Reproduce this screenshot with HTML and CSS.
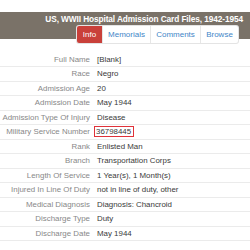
FILE: index.html
```html
<!DOCTYPE html>
<html lang="en">
<head>
    <meta charset="UTF-8">
    <title>Hospital Admission Card</title>
    <link rel="stylesheet" href="styles.css">
</head>
<body>
    <div class="header">
        <h1 class="title">US, WWII Hospital Admission Card Files, 1942-1954</h1>
        <ul class="tabs">
            <li class="tab active">Info</li>
            <li class="tab">Memorials</li>
            <li class="tab">Comments</li>
            <li class="tab">Browse</li>
        </ul>
    </div>

    <table class="record">
        <tr><th>Full Name</th><td>[Blank]</td></tr>
        <tr><th>Race</th><td>Negro</td></tr>
        <tr><th>Admission Age</th><td>20</td></tr>
        <tr><th>Admission Date</th><td>May 1944</td></tr>
        <tr><th>Admission Type Of Injury</th><td>Disease</td></tr>
        <tr><th>Military Service Number</th><td><span class="mark">36798445</span></td></tr>
        <tr><th>Rank</th><td>Enlisted Man</td></tr>
        <tr><th>Branch</th><td>Transportation Corps</td></tr>
        <tr><th>Length Of Service</th><td>1 Year(s), 1 Month(s)</td></tr>
        <tr><th>Injured In Line Of Duty</th><td>not in line of duty, other</td></tr>
        <tr><th>Medical Diagnosis</th><td>Diagnosis: Chancroid</td></tr>
        <tr><th>Discharge Type</th><td>Duty</td></tr>
        <tr><th>Discharge Date</th><td>May 1944</td></tr>
    </table>
</body>
</html>
```

FILE: styles.css
```css
body {
    margin: 0;
    padding-top: 12px;
    font-family: "Liberation Sans", Arial, sans-serif;
    background: #fff;
    width: 250px;
    overflow: hidden;
}
.header {
    background: #7a7268;
    height: 27px;
    position: relative;
}
.title {
    margin: 0;
    padding: 2px 7px 0 0;
    text-align: right;
    color: #fff;
    font-size: 8.3px;
    font-weight: bold;
    line-height: 11px;
    letter-spacing: -0.1px;
}
.tabs {
    list-style: none;
    margin: 0;
    padding: 0;
    display: flex;
    position: absolute;
    left: 77px;
    top: 14px;
    background: #fff;
    border-radius: 2px;
    box-shadow: 0 0 0 1px #e4e4e4;
}
.tab {
    height: 17px;
    line-height: 17px;
    font-size: 8px;
    color: #3f86c8;
    text-align: center;
    border-left: 1px solid #e6e6e6;
}
.tab:nth-child(1) { width: 25px; border-left: none; }
.tab:nth-child(2) { width: 47px; }
.tab:nth-child(3) { width: 49px; }
.tab:nth-child(4) { width: 37px; }
.tab.active {
    background: #c9403a;
    color: #fff;
    border-radius: 2px 0 0 2px;
}
.record {
    margin-top: 13px;
    width: 100%;
    border-collapse: collapse;
    font-size: 7.9px;
}
.record tr {
    border-bottom: 1px solid #ebebeb;
    height: 14.5px;
}
.record th {
    font-weight: normal;
    color: #888;
    text-align: right;
    width: 90px;
    padding: 0 5px 0 0;
    white-space: nowrap;
}
.record td {
    color: #3a3a3a;
    padding: 0 0 0 2px;
    white-space: nowrap;
}
.mark {
    display: inline-block;
    border: 1.5px solid #e0323a;
    padding: 0 2px 0 1px;
    margin-left: -3px;
    line-height: 9px;
}
```
